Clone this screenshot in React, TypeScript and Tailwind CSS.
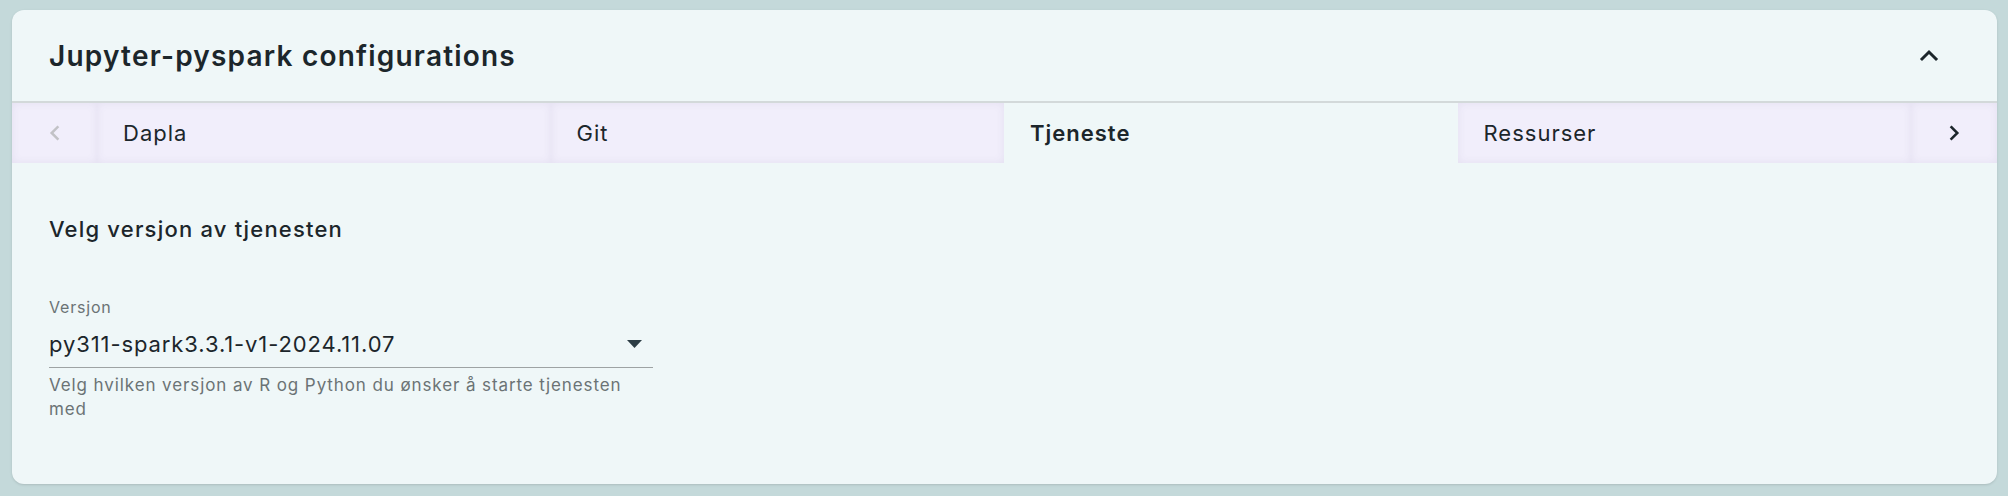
import React, { useState } from "react";

const tabs = ["Dapla", "Git", "Tjeneste", "Ressurser"];

const Chevron = ({ dir, className }: { dir: "left" | "right" | "up"; className?: string }) => {
  const d =
    dir === "left" ? "M15 5 L8 12 L15 19" : dir === "right" ? "M9 5 L16 12 L9 19" : "M5 15 L12 8 L19 15";
  return (
    <svg viewBox="0 0 24 24" className={className} fill="none" stroke="currentColor" strokeWidth={3} strokeLinecap="square">
      <path d={d} />
    </svg>
  );
};

const App = () => {
  const [active, setActive] = useState<number>(2);
  const [version] = useState<string>("py311-spark3.3.1-v1-2024.11.07");

  return (
    <div className="w-full min-h-screen bg-[#c4d9da] pt-[10px] pl-3 pr-[11px] pb-3" style={{ fontFamily: "Inter, 'Noto Sans', sans-serif" }}>
      <div className="bg-[#eff7f8] rounded-xl shadow-sm overflow-hidden text-[#1c262b]">
        {/* header */}
        <div className="flex items-center h-[93px] pl-[37px] pr-[56px] border-b-2 border-[#d3d9da]">
          <h2 className="text-[28px] font-semibold tracking-[1.2px]">Jupyter-pyspark configurations</h2>
          <button className="ml-auto">
            <Chevron dir="up" className="w-[24px] h-[24px] text-[#1c262b]" />
          </button>
        </div>

        {/* tabs */}
        <div className="flex h-[60px]">
          <button className="w-[85px] flex items-center justify-center bg-[#f1eefb] shadow-[inset_0_0_8px_rgba(80,60,120,0.08)]">
            <Chevron dir="left" className="w-[20px] h-[20px] text-[#c2c2c6]" />
          </button>
          {tabs.map((tab, i) => (
            <button
              key={tab}
              onClick={() => setActive(i)}
              className={
                i === active
                  ? "flex-1 flex items-center pl-[26px] text-[22px] tracking-[1px] font-semibold bg-[#eff7f8]"
                  : "flex-1 flex items-center pl-[26px] text-[22px] tracking-[1px] bg-[#f1eefb] shadow-[inset_0_0_8px_rgba(80,60,120,0.08)]"
              }
            >
              {tab}
            </button>
          ))}
          <button className="w-[86px] flex items-center justify-center bg-[#f1eefb] shadow-[inset_0_0_8px_rgba(80,60,120,0.08)]">
            <Chevron dir="right" className="w-[20px] h-[20px] text-[#1c262b]" />
          </button>
        </div>

        {/* content */}
        <div className="pl-[37px] pt-[52px] pb-[63px]">
          <h3 className="text-[22px] leading-[28px] font-medium tracking-[1.2px]">Velg versjon av tjenesten</h3>
          <div className="w-[604px] mt-[54px]">
            <label className="block text-[16px] leading-[20px] tracking-[0.8px] text-[#6b7375]">Versjon</label>
            <div className="flex items-center mt-[13px] pb-[9px] border-b border-[#9ea3a4]">
              <span className="text-[22px] leading-[28px] tracking-[0.9px]">{version}</span>
              <svg viewBox="0 0 15 8" className="ml-auto mr-[11px] w-[15px] h-[8px]">
                <path d="M0 0 L15 0 L7.5 8 Z" fill="#2c3d45" />
              </svg>
            </div>
            <p className="mt-[5px] text-[17px] leading-[24px] tracking-[0.9px] text-[#6b7375]">
              Velg hvilken versjon av R og Python du ønsker å starte tjenesten med
            </p>
          </div>
        </div>
      </div>
    </div>
  );
};

export default App;
